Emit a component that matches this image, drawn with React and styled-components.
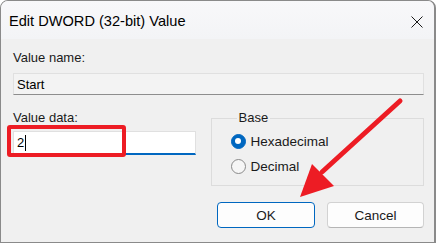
import styled, { createGlobalStyle } from "styled-components";

const GlobalStyle = createGlobalStyle`
  html, body {
    margin: 0;
    background: #ffffff;
  }
  body {
    font-family: "Liberation Sans", Arial, sans-serif;
    color: #000000;
  }
`;

const Window = styled.div`
  position: relative;
  width: 436px;
  height: 243px;
  box-sizing: border-box;
  border: 1px solid #8a8a8a;
  border-right-width: 2px;
  border-radius: 8px 8px 0 0;
  background: #f0f0f0;
  display: flex;
  flex-direction: column;
  overflow: hidden;
`;

const TitleBar = styled.div`
  height: 36px;
  flex-shrink: 0;
  display: flex;
  align-items: center;
  justify-content: space-between;
  padding: 2px 10px 0 8px;
  background: linear-gradient(180deg, #f8f8fa 0%, #f3f4f6 100%);
  font-size: 14.6px;
`;

const CloseButton = styled.div`
  width: 14px;
  height: 14px;
  display: flex;
  align-items: center;
  justify-content: center;
  margin-top: 2px;
`;

const Body = styled.div`
  flex: 1;
  display: flex;
  flex-direction: column;
  padding: 11px 10px 0 12px;
`;

const Label = styled.div`
  font-size: 13px;
  line-height: 16px;
  color: #1a1a1a;
`;

const TextBox = styled.div`
  box-sizing: border-box;
  display: flex;
  align-items: center;
  font-size: 13px;
  padding-left: 3px;
  border: 1px solid #e0e0e0;
  ${(p) =>
    p.$active
      ? `
    height: 24px;
    margin-top: 5px;
    background: #ffffff;
    border-bottom: 2px solid #0067c0;
  `
      : `
    height: 22px;
    margin-top: 7px;
    background: #f3f3f3;
    border-bottom: 1px solid #8d8d8d;
  `}
`;

const Caret = styled.span`
  display: inline-block;
  width: 1px;
  height: 16px;
  background: #000;
  margin-left: 1px;
`;

const Row = styled.div`
  display: flex;
  gap: 15px;
  margin-top: 15px;
`;

const Column = styled.div`
  position: relative;
  width: 183px;
  display: flex;
  flex-direction: column;
`;

const Highlight = styled.div`
  position: absolute;
  left: -6px;
  top: 15px;
  width: 119px;
  height: 32px;
  box-sizing: border-box;
  border: 4px solid #ed1c24;
  border-radius: 3px;
`;

const GroupBox = styled.fieldset`
  margin: 0;
  width: 214px;
  height: 76px;
  box-sizing: border-box;
  border: 1px solid #dcdcdc;
  padding: 5px 0 0 19px;
  display: flex;
  flex-direction: column;
  gap: 5px;
`;

const Legend = styled.legend`
  font-size: 13px;
  line-height: 16px;
  padding: 0 2px;
  margin-left: 6px;
  color: #1a1a1a;
`;

const RadioRow = styled.div`
  display: flex;
  align-items: center;
  gap: 5px;
  height: 20px;
  font-size: 13.5px;
  color: #1a1a1a;
`;

const Radio = styled.span`
  width: 15px;
  height: 15px;
  box-sizing: border-box;
  border-radius: 50%;
  display: flex;
  align-items: center;
  justify-content: center;
  border: 1px solid ${(p) => (p.$checked ? "#0067c0" : "#8a8a8a")};
  background: ${(p) => (p.$checked ? "#0067c0" : "#f6f6f6")};

  &::after {
    content: "";
    display: ${(p) => (p.$checked ? "block" : "none")};
    width: 6px;
    height: 6px;
    border-radius: 50%;
    background: #ffffff;
  }
`;

const ButtonRow = styled.div`
  display: flex;
  justify-content: flex-end;
  gap: 12px;
  margin-top: 16px;
`;

const Button = styled.div`
  width: ${(p) => (p.$primary ? "98px" : "97px")};
  height: 26px;
  box-sizing: border-box;
  border-radius: 4px;
  background: #fdfdfd;
  border: 1px solid ${(p) => (p.$primary ? "#0067c0" : "#d2d2d2")};
  border-bottom-color: ${(p) => (p.$primary ? "#0067c0" : "#b5b5b5")};
  display: flex;
  align-items: center;
  justify-content: center;
  font-size: 13.5px;
  color: #1a1a1a;
`;

const Annotation = styled.svg`
  position: absolute;
  left: -1px;
  top: -1px;
  pointer-events: none;
`;

export default function App() {
  return (
    <>
      <GlobalStyle />
      <Window>
        <TitleBar>
          <span>Edit DWORD (32-bit) Value</span>
          <CloseButton>
            <svg width="12" height="12" viewBox="0 0 12 12">
              <path d="M0.5 0.5 L11.5 11.5 M11.5 0.5 L0.5 11.5" stroke="#1a1a1a" strokeWidth="1" />
            </svg>
          </CloseButton>
        </TitleBar>
        <Body>
          <Label>Value name:</Label>
          <TextBox>Start</TextBox>
          <Row>
            <Column>
              <Label>Value data:</Label>
              <TextBox $active>
                2<Caret />
              </TextBox>
              <Highlight />
            </Column>
            <GroupBox>
              <Legend>Base</Legend>
              <RadioRow>
                <Radio $checked />
                Hexadecimal
              </RadioRow>
              <RadioRow>
                <Radio />
                Decimal
              </RadioRow>
            </GroupBox>
          </Row>
          <ButtonRow>
            <Button $primary>OK</Button>
            <Button>Cancel</Button>
          </ButtonRow>
        </Body>
        <Annotation width="437" height="244" viewBox="0 0 437 244">
          <line x1="400" y1="101" x2="322" y2="172" stroke="#ed1c24" strokeWidth="5" strokeLinecap="round" />
          <polygon points="300,197 312,164 334,186" fill="#ed1c24" />
        </Annotation>
      </Window>
    </>
  );
}
